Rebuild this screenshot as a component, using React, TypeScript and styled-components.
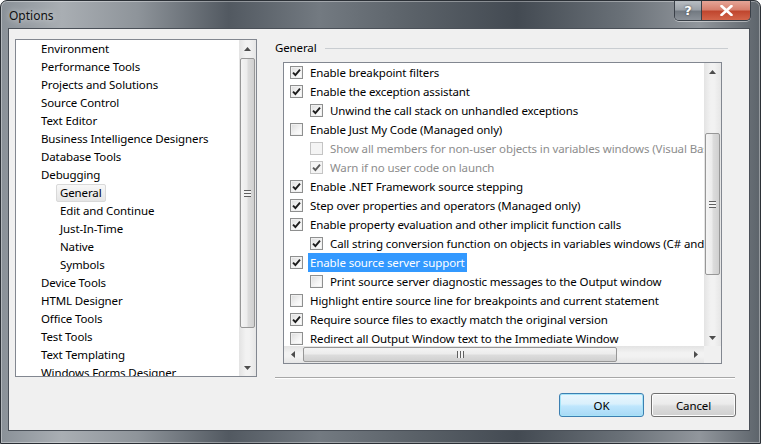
import styled, {createGlobalStyle} from 'styled-components';

const GlobalStyle = createGlobalStyle`
  html, body {
    margin: 0;
    padding: 0;
    background: #ffffff;
  }
  * {
    box-sizing: border-box;
  }
  body {
    font-family: 'Noto Sans', 'Open Sans', sans-serif;
    font-size: 11.5px;
    letter-spacing: -0.12px;
    color: #000;
  }
`;

type TreeItem = {label: string; level: number; selected?: boolean};

const treeItems: TreeItem[] = [
  {label: 'Environment', level: 0},
  {label: 'Performance Tools', level: 0},
  {label: 'Projects and Solutions', level: 0},
  {label: 'Source Control', level: 0},
  {label: 'Text Editor', level: 0},
  {label: 'Business Intelligence Designers', level: 0},
  {label: 'Database Tools', level: 0},
  {label: 'Debugging', level: 0},
  {label: 'General', level: 1, selected: true},
  {label: 'Edit and Continue', level: 1},
  {label: 'Just-In-Time', level: 1},
  {label: 'Native', level: 1},
  {label: 'Symbols', level: 1},
  {label: 'Device Tools', level: 0},
  {label: 'HTML Designer', level: 0},
  {label: 'Office Tools', level: 0},
  {label: 'Test Tools', level: 0},
  {label: 'Text Templating', level: 0},
  {label: 'Windows Forms Designer', level: 0},
];

type OptionItem = {
  label: string;
  level: number;
  checked: boolean;
  disabled?: boolean;
  highlighted?: boolean;
};

const options: OptionItem[] = [
  {label: 'Enable breakpoint filters', level: 0, checked: true},
  {label: 'Enable the exception assistant', level: 0, checked: true},
  {label: 'Unwind the call stack on unhandled exceptions', level: 1, checked: true},
  {label: 'Enable Just My Code (Managed only)', level: 0, checked: false},
  {
    label: 'Show all members for non-user objects in variables windows (Visual Basic only)',
    level: 1,
    checked: false,
    disabled: true,
  },
  {label: 'Warn if no user code on launch', level: 1, checked: true, disabled: true},
  {label: 'Enable .NET Framework source stepping', level: 0, checked: true},
  {label: 'Step over properties and operators (Managed only)', level: 0, checked: true},
  {label: 'Enable property evaluation and other implicit function calls', level: 0, checked: true},
  {
    label: 'Call string conversion function on objects in variables windows (C# and JavaScript only)',
    level: 1,
    checked: true,
  },
  {label: 'Enable source server support', level: 0, checked: true, highlighted: true},
  {label: 'Print source server diagnostic messages to the Output window', level: 1, checked: false},
  {label: 'Highlight entire source line for breakpoints and current statement', level: 0, checked: false},
  {label: 'Require source files to exactly match the original version', level: 0, checked: true},
  {label: 'Redirect all Output Window text to the Immediate Window', level: 0, checked: false},
];

function Arrow({dir}: {dir: 'up' | 'down' | 'left' | 'right'}) {
  const pts = {
    up: '0,4 3.5,0 7,4',
    down: '0,0 3.5,4 7,0',
    left: '4,0 0,3.5 4,7',
    right: '0,0 4,3.5 0,7',
  }[dir];
  const horiz = dir === 'left' || dir === 'right';
  return (
    <svg width={horiz ? 4 : 7} height={horiz ? 7 : 4} viewBox={horiz ? '0 0 4 7' : '0 0 7 4'}>
      <polygon points={pts} fill="#4d4d4d" />
    </svg>
  );
}

function CheckMark({disabled}: {disabled?: boolean}) {
  return (
    <svg width="9" height="9" viewBox="0 0 9 9">
      <path
        d="M1 4.6 L3.4 7 L8 1.6"
        fill="none"
        stroke={disabled ? '#5a5a5a' : '#1c1c1c'}
        strokeWidth="1.9"
      />
    </svg>
  );
}

function VScrollBar({offset, size}: {offset: number; size: number}) {
  return (
    <VBar>
      <ArrowCell>
        <Arrow dir="up" />
      </ArrowCell>
      <VTrack style={{paddingTop: offset}}>
        <VThumb style={{height: size}}>
          <Grip $vertical />
        </VThumb>
      </VTrack>
      <ArrowCell>
        <Arrow dir="down" />
      </ArrowCell>
    </VBar>
  );
}

function HScrollBar({offset, size}: {offset: number; size: number}) {
  return (
    <HBar>
      <ArrowCell>
        <Arrow dir="left" />
      </ArrowCell>
      <HTrack style={{paddingLeft: offset}}>
        <HThumb style={{width: size}}>
          <Grip />
        </HThumb>
      </HTrack>
      <ArrowCell>
        <Arrow dir="right" />
      </ArrowCell>
    </HBar>
  );
}

export default function App() {
  return (
    <>
      <GlobalStyle />
      <Window>
        <TitleBar>
          <Title>Options</Title>
          <CaptionButtons>
            <HelpButton>?</HelpButton>
            <CloseButton>
              <svg width="13" height="11" viewBox="0 0 13 11">
                <path
                  d="M1.5 1 L11.5 10 M11.5 1 L1.5 10"
                  stroke="#ffffff"
                  strokeWidth="2.6"
                  strokeLinecap="round"
                />
              </svg>
            </CloseButton>
          </CaptionButtons>
        </TitleBar>
        <Client>
          <TreeBox>
            <TreeList>
              {treeItems.map(item => (
                <TreeRow key={item.label} $level={item.level}>
                  <TreeLabel $selected={item.selected}>{item.label}</TreeLabel>
                </TreeRow>
              ))}
            </TreeList>
            <VScrollBar offset={1} size={270} />
          </TreeBox>
          <RightColumn>
            <GroupHeader>
              <span>General</span>
              <GroupLine />
            </GroupHeader>
            <OptionsBox>
              <OptionsList>
                {options.map(opt => (
                  <OptionRow key={opt.label} $level={opt.level}>
                    <CheckBox $disabled={opt.disabled}>
                      {opt.checked && <CheckMark disabled={opt.disabled} />}
                    </CheckBox>
                    <OptionLabel $disabled={opt.disabled} $highlighted={opt.highlighted}>
                      {opt.label}
                    </OptionLabel>
                  </OptionRow>
                ))}
              </OptionsList>
              <VScrollBar offset={53} size={142} />
              <HScrollBar offset={2} size={314} />
              <Corner />
            </OptionsBox>
            <Separator />
            <ButtonRow>
              <DialogButton $default>OK</DialogButton>
              <DialogButton>Cancel</DialogButton>
            </ButtonRow>
          </RightColumn>
        </Client>
      </Window>
    </>
  );
}

const Window = styled.div`
  width: 761px;
  height: 444px;
  display: flex;
  flex-direction: column;
  padding: 0 10px 12px 7px;
  border: 1px solid #2b3036;
  border-radius: 7px 7px 0 0;
  background: linear-gradient(
    90deg,
    #8a9198 0%,
    #a9aeb3 8%,
    #8e949a 18%,
    #525961 30%,
    #737a81 42%,
    #5b6269 54%,
    #434a52 68%,
    #6a7178 82%,
    #91969c 92%,
    #5d646b 100%
  );
  box-shadow: inset 0 0 0 1px rgba(255, 255, 255, 0.35);
`;

const TitleBar = styled.div`
  height: 27px;
  display: flex;
  justify-content: space-between;
  align-items: flex-start;
  margin-right: -1px;
`;

const Title = styled.div`
  padding: 6px 0 0 1px;
  font-size: 12px;
  letter-spacing: 0;
  color: #101010;
  text-shadow: 0 0 6px rgba(255, 255, 255, 0.8);
`;

const CaptionButtons = styled.div`
  display: flex;
  border: 1px solid #3a4048;
  border-top: none;
  border-radius: 0 0 5px 5px;
  overflow: hidden;
  box-shadow: 0 1px 0 rgba(255, 255, 255, 0.45);
`;

const HelpButton = styled.div`
  width: 27px;
  height: 19px;
  display: flex;
  align-items: center;
  justify-content: center;
  font-family: 'DejaVu Sans', sans-serif;
  font-weight: bold;
  font-size: 13px;
  color: #ffffff;
  text-shadow: 0 0 2px #333;
  border-right: 1px solid #3a4048;
  background: linear-gradient(180deg, #b8bdc2 0%, #9ba1a8 45%, #737a82 55%, #8b9198 100%);
`;

const CloseButton = styled.div`
  width: 48px;
  height: 19px;
  display: flex;
  align-items: center;
  justify-content: center;
  background: linear-gradient(180deg, #e5a597 0%, #d7806e 45%, #c0472f 55%, #d3654a 100%);
`;

const Client = styled.div`
  flex: 1;
  display: flex;
  gap: 18px;
  padding: 10px 13px 0 6px;
  background: #f0f0f0;
  border: 1px solid #4a5058;
`;

const TreeBox = styled.div`
  width: 242px;
  height: 338px;
  display: flex;
  border: 1px solid #828790;
  background: #ffffff;
`;

const TreeList = styled.div`
  flex: 1;
  overflow: hidden;
`;

const TreeRow = styled.div<{$level: number}>`
  height: 18px;
  display: flex;
  align-items: center;
  padding-left: ${p => 21 + p.$level * 19}px;
  white-space: nowrap;
`;

const TreeLabel = styled.span<{$selected?: boolean}>`
  height: 18px;
  line-height: 16px;
  padding: 0 3px;
  border: 1px solid ${p => (p.$selected ? '#d9d9d9' : 'transparent')};
  border-radius: 2px;
  background: ${p => (p.$selected ? 'linear-gradient(180deg, #f8f8f8, #e5e5e5)' : 'transparent')};
`;

const VBar = styled.div`
  width: 17px;
  display: flex;
  flex-direction: column;
  background: linear-gradient(90deg, #e3e3e3, #f2f2f2 40%, #f2f2f2 60%, #e6e6e6);
`;

const HBar = styled.div`
  height: 17px;
  display: flex;
  background: linear-gradient(180deg, #e3e3e3, #f2f2f2 40%, #f2f2f2 60%, #e6e6e6);
`;

const ArrowCell = styled.div`
  width: 17px;
  height: 17px;
  flex: none;
  display: flex;
  align-items: center;
  justify-content: center;
`;

const VTrack = styled.div`
  flex: 1;
  display: flex;
  flex-direction: column;
  align-items: center;
`;

const HTrack = styled.div`
  flex: 1;
  display: flex;
  align-items: center;
`;

const VThumb = styled.div`
  width: 15px;
  display: flex;
  align-items: center;
  justify-content: center;
  border: 1px solid #979797;
  border-radius: 2px;
  background: linear-gradient(90deg, #f4f4f4 0%, #ececec 45%, #dcdcdc 55%, #d0d0d0 100%);
`;

const HThumb = styled.div`
  height: 15px;
  display: flex;
  align-items: center;
  justify-content: center;
  border: 1px solid #979797;
  border-radius: 2px;
  background: linear-gradient(180deg, #f4f4f4 0%, #ececec 45%, #dcdcdc 55%, #d0d0d0 100%);
`;

const Grip = styled.div<{$vertical?: boolean}>`
  width: 7px;
  height: 7px;
  background: ${p =>
    p.$vertical
      ? 'repeating-linear-gradient(180deg, #606060 0 1px, #f4f4f4 1px 3px)'
      : 'repeating-linear-gradient(90deg, #606060 0 1px, #f4f4f4 1px 3px)'};
`;

const RightColumn = styled.div`
  flex: 1;
  display: flex;
  flex-direction: column;
`;

const GroupHeader = styled.div`
  height: 16px;
  display: flex;
  align-items: center;
  gap: 8px;
  padding-right: 8px;
`;

const GroupLine = styled.div`
  flex: 1;
  height: 1px;
  margin-top: 2px;
  background: #c9cdd1;
`;

const OptionsBox = styled.div`
  width: 439px;
  height: 302px;
  margin: 7px 0 0 8px;
  display: grid;
  grid-template-columns: 1fr 17px;
  grid-template-rows: 1fr 17px;
  border: 1px solid #828790;
  background: #ffffff;
`;

const OptionsList = styled.div`
  overflow: hidden;
  min-width: 0;
`;

const OptionRow = styled.div<{$level: number}>`
  height: 19px;
  display: flex;
  align-items: center;
  padding-left: ${p => 6 + p.$level * 20}px;
  white-space: nowrap;
`;

const CheckBox = styled.span<{$disabled?: boolean}>`
  width: 13px;
  height: 13px;
  flex: none;
  display: flex;
  align-items: center;
  justify-content: center;
  border: 1px solid ${p => (p.$disabled ? '#c4c4c4' : '#8e8f8f')};
  background: ${p =>
    p.$disabled ? '#f4f4f4' : 'linear-gradient(135deg, #dcdcdc 0%, #f5f5f5 60%, #ffffff 100%)'};
  box-shadow: inset 0 0 0 1px ${p => (p.$disabled ? '#f4f4f4' : '#f0f0f0')};
`;

const OptionLabel = styled.span<{$disabled?: boolean; $highlighted?: boolean}>`
  margin-left: 5px;
  padding: 1px 2px;
  line-height: 17px;
  color: ${p => (p.$highlighted ? '#ffffff' : p.$disabled ? '#8d8d8d' : '#000000')};
  background: ${p => (p.$highlighted ? '#3399ff' : 'transparent')};
`;

const Corner = styled.div`
  background: #f0f0f0;
`;

const Separator = styled.div`
  height: 1px;
  margin: 13px 1px 0 0;
  background: #a7a7a7;
  box-shadow: 0 1px 0 #ffffff;
`;

const ButtonRow = styled.div`
  display: flex;
  justify-content: flex-end;
  gap: 7px;
  margin-top: 15px;
`;

const DialogButton = styled.div<{$default?: boolean}>`
  width: 85px;
  height: 24px;
  display: flex;
  align-items: center;
  justify-content: center;
  border-radius: 3px;
  border: 1px solid ${p => (p.$default ? '#3c7fb1' : '#707070')};
  background: ${p =>
    p.$default
      ? 'linear-gradient(180deg, #eaf6fd 0%, #d9f0fc 45%, #bee6fd 55%, #a7d9f5 100%)'
      : 'linear-gradient(180deg, #f2f2f2 0%, #ebebeb 45%, #dddddd 55%, #cfcfcf 100%)'};
  box-shadow: inset 0 0 0 1px ${p => (p.$default ? '#a6e4f8' : '#fcfcfc')};
`;
